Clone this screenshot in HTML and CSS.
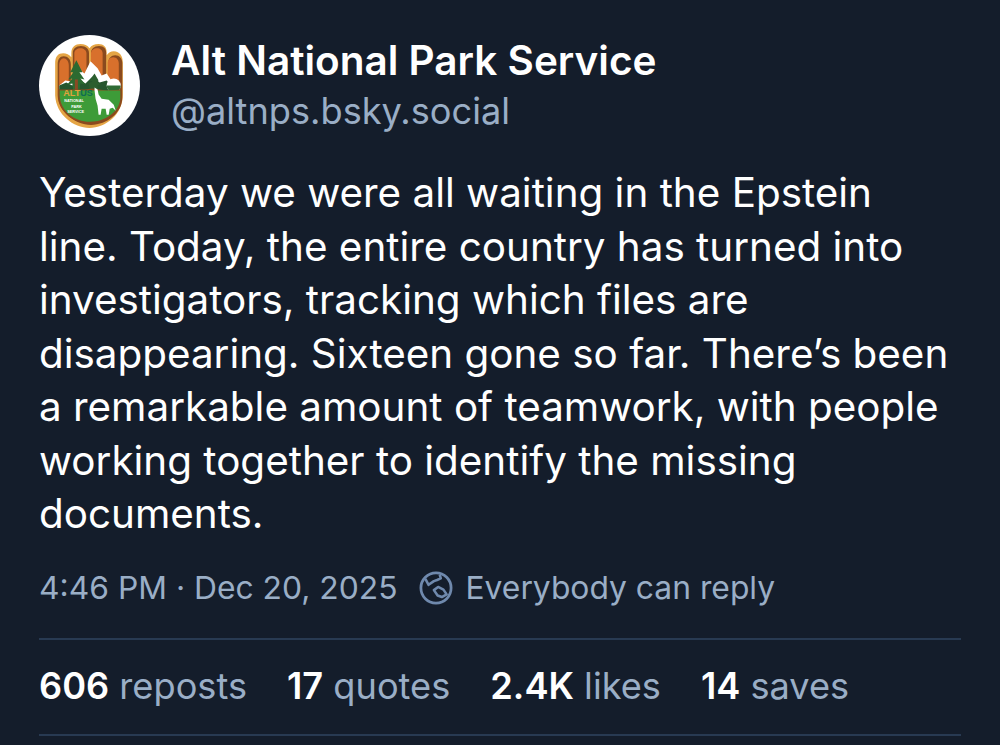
FILE: index.html
```html
<!DOCTYPE html>
<html lang="en">
<head>
<meta charset="utf-8">
<title>Alt National Park Service</title>
<link rel="stylesheet" href="styles.css">
</head>
<body>
<main class="post">
  <header class="author">
    <svg class="avatar" viewBox="0 0 100 100" role="img" aria-label="Alt National Park Service logo">
      <circle cx="50" cy="50" r="50" fill="#fff"/>
      <path d="M16 28c0-7 3-10 8-10 3 0 6 1 8 4V18c0-6 4-9 9-9 4 0 7 1 9 4 2-3 5-4 9-4 5 0 8 3 8 8v3c2-3 4-4 7-4 6 0 9 5 9 11v32c0 20-17 33-33 33S17 79 16 60z" fill="#e5a545"/>
      <path d="M18.500 29c0-5 2-8 6-8s7 3 7 8v25h2V18c0-4 3-7 8-7s8 3 8 7v36h2V18c0-4 3-7 8-7s7 3 7 7v36h2V28c0-5 3-8 7-8s7 3 7 8v34c0 15-15 27-31 27S19 76 18.500 60z" fill="#8a4a1e"/>
      <path d="M20 30c0-4 2-7 4.500-7s5 3 5 7v26h5.500V18c0-3 3-5 6-5s6 2 6 5v38h4.500V18c0-3 3-5 6-5s5.500 2 5.500 5v38h5V28c0-3 2-6 5.500-6s5.500 3 5.500 6v30H20z" fill="#d8702c"/>
      <path d="M20 50l6-5 6 1 8-12 5 4 6-12 7 7 4 7 5-2 4 6v10H20z" fill="#fff"/>
      <path d="M20 50l7-3 6 3 7-6 6 4 7-7 7 6 7-2 4 5v9H20z" fill="#26562e"/>
      <path d="M34 56l-1-8-5 1 5-6-4 1 5-7-3 0 6-12 6 12-3 0 5 7-4-1 5 6-5-1-1 8z" fill="#2c6a30"/>
      <path d="M35.500 57V44h3v13z" fill="#8a4a24"/>
      <path d="M51 56l-2-8 4-2-3-1 5-7 4 7-2 1 4 3-3 1v6z" fill="#2c5e2e"/>
      <circle cx="74" cy="50" r="7" fill="#fff"/>
      <path d="M67 50h14a7 7 0 0 1-14 0z" fill="#2f6b34"/>
      <path d="M18.800 54h26l8-1 14 2 15-1v8c0 15-15 26-31 26S19.300 76 18.800 60z" fill="#8a4a1e"/>
      <path d="M20.500 55h60v7c0 13-14 24-30 24S21 75 20.500 60z" fill="#3d9b38"/>
      <path d="M55 52l3 2 1 5 3 4 7 1 5 5 2 6-3-3-3 1-1 6h-2l-1-6-4 0-1 6h-2l-1-9-2-7-1-8z" fill="#fff"/>
      <text class="logo-alt" x="24" y="60">ALT<tspan class="logo-us">US</tspan></text>
      <text class="logo-small" x="25" y="66">NATIONAL</text>
      <text class="logo-small" x="32" y="72">PARK</text>
      <text class="logo-small" x="28" y="77">SERVICE</text>
    </svg>
    <div class="names">
      <div class="name">Alt National Park Service</div>
      <div class="handle">@altnps.bsky.social</div>
    </div>
  </header>
  <p class="text">Yesterday we were all waiting in the Epstein line. Today, the entire country has turned into investigators, tracking which files are disappearing. Sixteen gone so far. There’s been a remarkable amount of teamwork, with people working together to identify the missing documents.</p>
  <div class="meta">
    <span>4:46 PM · Dec 20, 2025</span>
    <span class="reply">
      <svg class="globe" viewBox="0 0 32 32" fill="none" aria-hidden="true">
        <circle cx="16" cy="16" r="14.200" stroke-width="2.600"/>
        <path d="M6 7.500l3 5.500 5-3.500 3-1 3.500-1.500-1-3.500" stroke-width="2.400" stroke-linejoin="round"/>
        <path d="M14 18l4-3 5 2.500 3 4.500-4.500 2.500-4-1.500z" stroke-width="2.400" stroke-linejoin="round"/>
      </svg>
      Everybody can reply
    </span>
  </div>
  <div class="stats">
    <span><b>606</b> reposts</span>
    <span><b>17</b> quotes</span>
    <span><b>2.4K</b> likes</span>
    <span><b>14</b> saves</span>
  </div>
</main>
</body>
</html>
```

FILE: styles.css
```css
html, body {
  margin: 0;
  height: 745px;
  overflow: hidden;
  background: #141d2b;
}
body {
  font-family: Inter, "Liberation Sans", sans-serif;
}
.post {
  box-sizing: border-box;
  width: 1000px;
  padding: 35px 39px 0 39px;
}
.author {
  display: flex;
  align-items: center;
  gap: 31px;
}
.avatar {
  width: 101px;
  height: 101px;
  flex: none;
}
.logo-alt {
  font: 700 9px "Liberation Sans", sans-serif;
  fill: #e2a13c;
}
.logo-us {
  fill: #0f6b52;
}
.logo-small {
  font: 700 3.800px "Liberation Sans", sans-serif;
  fill: #fff;
}
.names {
  display: flex;
  flex-direction: column;
  gap: 5px;
}
.name {
  color: #fff;
  font-size: 40.500px;
  font-weight: 600;
  line-height: 46px;
}
.handle {
  color: #9aaec6;
  font-size: 36.200px;
  line-height: 44px;
}
.text {
  margin: 30px 0 0;
  color: #fff;
  font-size: 40.400px;
  line-height: 53.500px;
}
.meta {
  display: flex;
  align-items: center;
  gap: 21px;
  margin-top: 25px;
  color: #9aaec6;
  font-size: 31.800px;
  line-height: 44px;
}
.reply {
  display: flex;
  align-items: center;
  gap: 13px;
}
.globe {
  width: 34px;
  height: 34px;
  stroke: #6f89ad;
}
.stats {
  display: flex;
  gap: 40px;
  margin-top: 28.500px;
  padding: 22px 0 24px;
  border-top: 2px solid #283a52;
  border-bottom: 2px solid #283a52;
  color: #9aaec6;
  font-size: 36.200px;
  line-height: 48px;
}
.stats b {
  color: #fff;
  font-weight: 600;
}
```
